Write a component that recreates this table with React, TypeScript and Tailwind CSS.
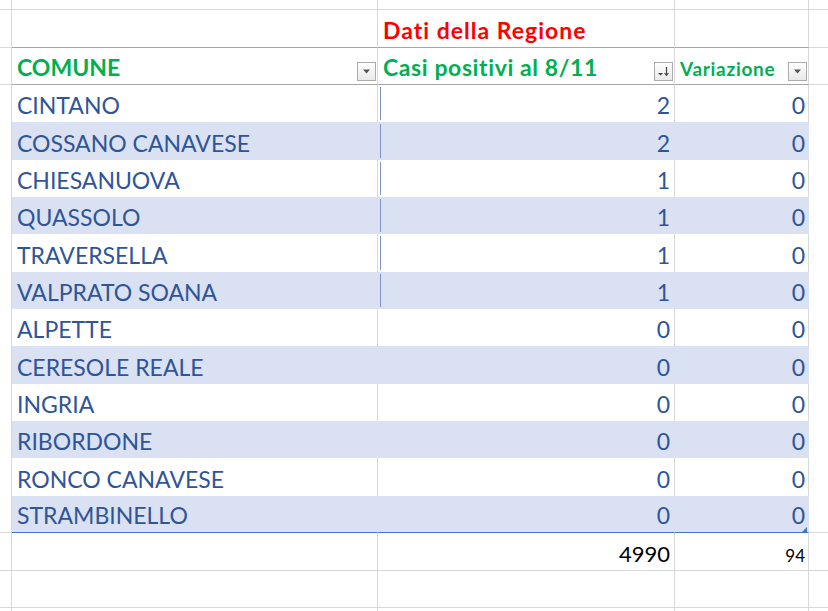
import React from 'react';

const rows = [
  { name: 'CINTANO', casi: 2, varz: 0 },
  { name: 'COSSANO CANAVESE', casi: 2, varz: 0 },
  { name: 'CHIESANUOVA', casi: 1, varz: 0 },
  { name: 'QUASSOLO', casi: 1, varz: 0 },
  { name: 'TRAVERSELLA', casi: 1, varz: 0 },
  { name: 'VALPRATO SOANA', casi: 1, varz: 0 },
  { name: 'ALPETTE', casi: 0, varz: 0 },
  { name: 'CERESOLE REALE', casi: 0, varz: 0 },
  { name: 'INGRIA', casi: 0, varz: 0 },
  { name: 'RIBORDONE', casi: 0, varz: 0 },
  { name: 'RONCO CANAVESE', casi: 0, varz: 0 },
  { name: 'STRAMBINELLO', casi: 0, varz: 0 },
];

const grid = 'grid grid-cols-[12px_366px_297px_134px_19px]';
const line = 'border-[#d9d9d9]';

// excel filter dropdown button
function FilterButton({ sorted = false }: { sorted?: boolean }) {
  return (
    <div className="mb-[3px] flex h-[19px] w-[19px] shrink-0 items-center justify-center border border-[#ababab] bg-gradient-to-b from-white to-[#e9e9e9]">
      {sorted ? (
        <svg width="13" height="11" viewBox="0 0 13 11">
          <path d="M1 7h5l-2.5 2.5z" fill="#444" />
          <path d="M9.5 1v8" stroke="#444" strokeWidth="1.2" />
          <path d="M7.5 7l2 2.4 2-2.4" stroke="#444" strokeWidth="1.1" fill="none" />
        </svg>
      ) : (
        <svg width="9" height="5" viewBox="0 0 9 5">
          <path d="M1 0.5h7l-3.5 4z" fill="#555" />
        </svg>
      )}
    </div>
  );
}

function EmptyRow({ h }: { h: string }) {
  return (
    <div className={`${grid} ${h}`}>
      <div className={`border-r border-b ${line}`} />
      <div className={`border-r border-b ${line}`} />
      <div className={`border-r border-b ${line}`} />
      <div className={`border-r border-b ${line}`} />
      <div className={`border-b ${line}`} />
    </div>
  );
}

export default function App() {
  return (
    <div
      className="h-[611px] w-[828px] overflow-hidden bg-white"
      style={{ fontFamily: 'Lato, "Noto Sans", sans-serif' }}
    >
      <EmptyRow h="h-[10px]" />

      {/* title row */}
      <div className={`${grid} h-[38px]`}>
        <div className={`border-r border-b ${line}`} />
        <div className={`border-r border-b ${line} border-b-[#8ea9db]`} />
        <div className={`flex items-end border-r border-b ${line} border-b-[#8ea9db] pl-[5px] pb-[5px]`}>
          <span className="text-[23px] font-bold leading-none tracking-[1px] text-[#ff0000]">Dati della Regione</span>
        </div>
        <div className={`border-r border-b ${line} border-b-[#8ea9db]`} />
        <div className={`border-b ${line}`} />
      </div>

      {/* header row */}
      <div className={`${grid} h-[37px]`}>
        <div className={`border-r border-b ${line}`} />
        <div className={`flex items-end justify-between border-r border-b ${line} border-b-[#a6a6a6] pl-[5px] pr-[1px]`}>
          <span className="pb-[5px] text-[23px] font-bold leading-none text-[#00b050]">COMUNE</span>
          <FilterButton />
        </div>
        <div className={`flex items-end justify-between border-r border-b ${line} border-b-[#a6a6a6] pl-[5px] pr-[1px]`}>
          <span className="pb-[5px] text-[23px] font-bold leading-none tracking-[0.6px] text-[#00b050]">Casi positivi al 8/11</span>
          <FilterButton sorted />
        </div>
        <div className={`flex items-end justify-between border-r border-b ${line} border-b-[#a6a6a6] pl-[5px] pr-[1px]`}>
          <span className="pb-[6px] text-[19px] font-bold leading-none tracking-[0.7px] text-[#00b050]">Variazione</span>
          <FilterButton />
        </div>
        <div className={`border-b ${line}`} />
      </div>

      {/* data rows */}
      {rows.map((r, i) => {
        const band = i % 2 === 1;
        const last = i === rows.length - 1;
        const cell = band ? 'bg-[#d9e1f2] border-r border-[#d9e1f2]' : `border-r ${line}`;
        const bottom = last ? 'border-b border-b-[#4472c4]' : '';
        return (
          <div key={r.name} className={`${grid} h-[37.33px]`}>
            <div className={`border-r ${line} ${last ? `border-b ${line}` : ''}`} />
            <div className={`flex items-end pl-[5px] ${cell} ${bottom}`}>
              <span className="pb-[5px] text-[23px] leading-none text-[#2f5597]">{r.name}</span>
            </div>
            <div className={`relative flex items-end justify-end pr-[4px] ${cell} ${bottom}`}>
              {i < 6 && <div className="absolute left-[2px] top-[2px] bottom-[2px] w-px bg-[#7f93c0]" />}
              <span className="pb-[5px] text-[23px] leading-none text-[#2f5597]">{r.casi}</span>
            </div>
            <div className={`relative flex items-end justify-end pr-[3px] ${cell} ${bottom}`}>
              <span className="pb-[5px] text-[23px] leading-none text-[#2f5597]">{r.varz}</span>
              {last && (
                <svg className="absolute right-[1px] bottom-0" width="5" height="5" viewBox="0 0 5 5">
                  <path d="M5 0v5H0z" fill="#4472c4" />
                </svg>
              )}
            </div>
            <div className={last ? `border-b ${line}` : ''} />
          </div>
        );
      })}

      {/* totals */}
      <div className={`${grid} h-[38px]`}>
        <div className={`border-r border-b ${line}`} />
        <div className={`border-r border-b ${line}`} />
        <div className={`flex items-end justify-end border-r border-b ${line} pr-[4px]`}>
          <span className="pb-[5px] text-[22px] leading-none text-black">4990</span>
        </div>
        <div className={`flex items-end justify-end border-r border-b ${line} pr-[3px]`}>
          <span className="pb-[6px] text-[17px] leading-none text-black">94</span>
        </div>
        <div className={`border-b ${line}`} />
      </div>

      <EmptyRow h="h-[37px]" />
      <EmptyRow h="h-[37px]" />
    </div>
  );
}
